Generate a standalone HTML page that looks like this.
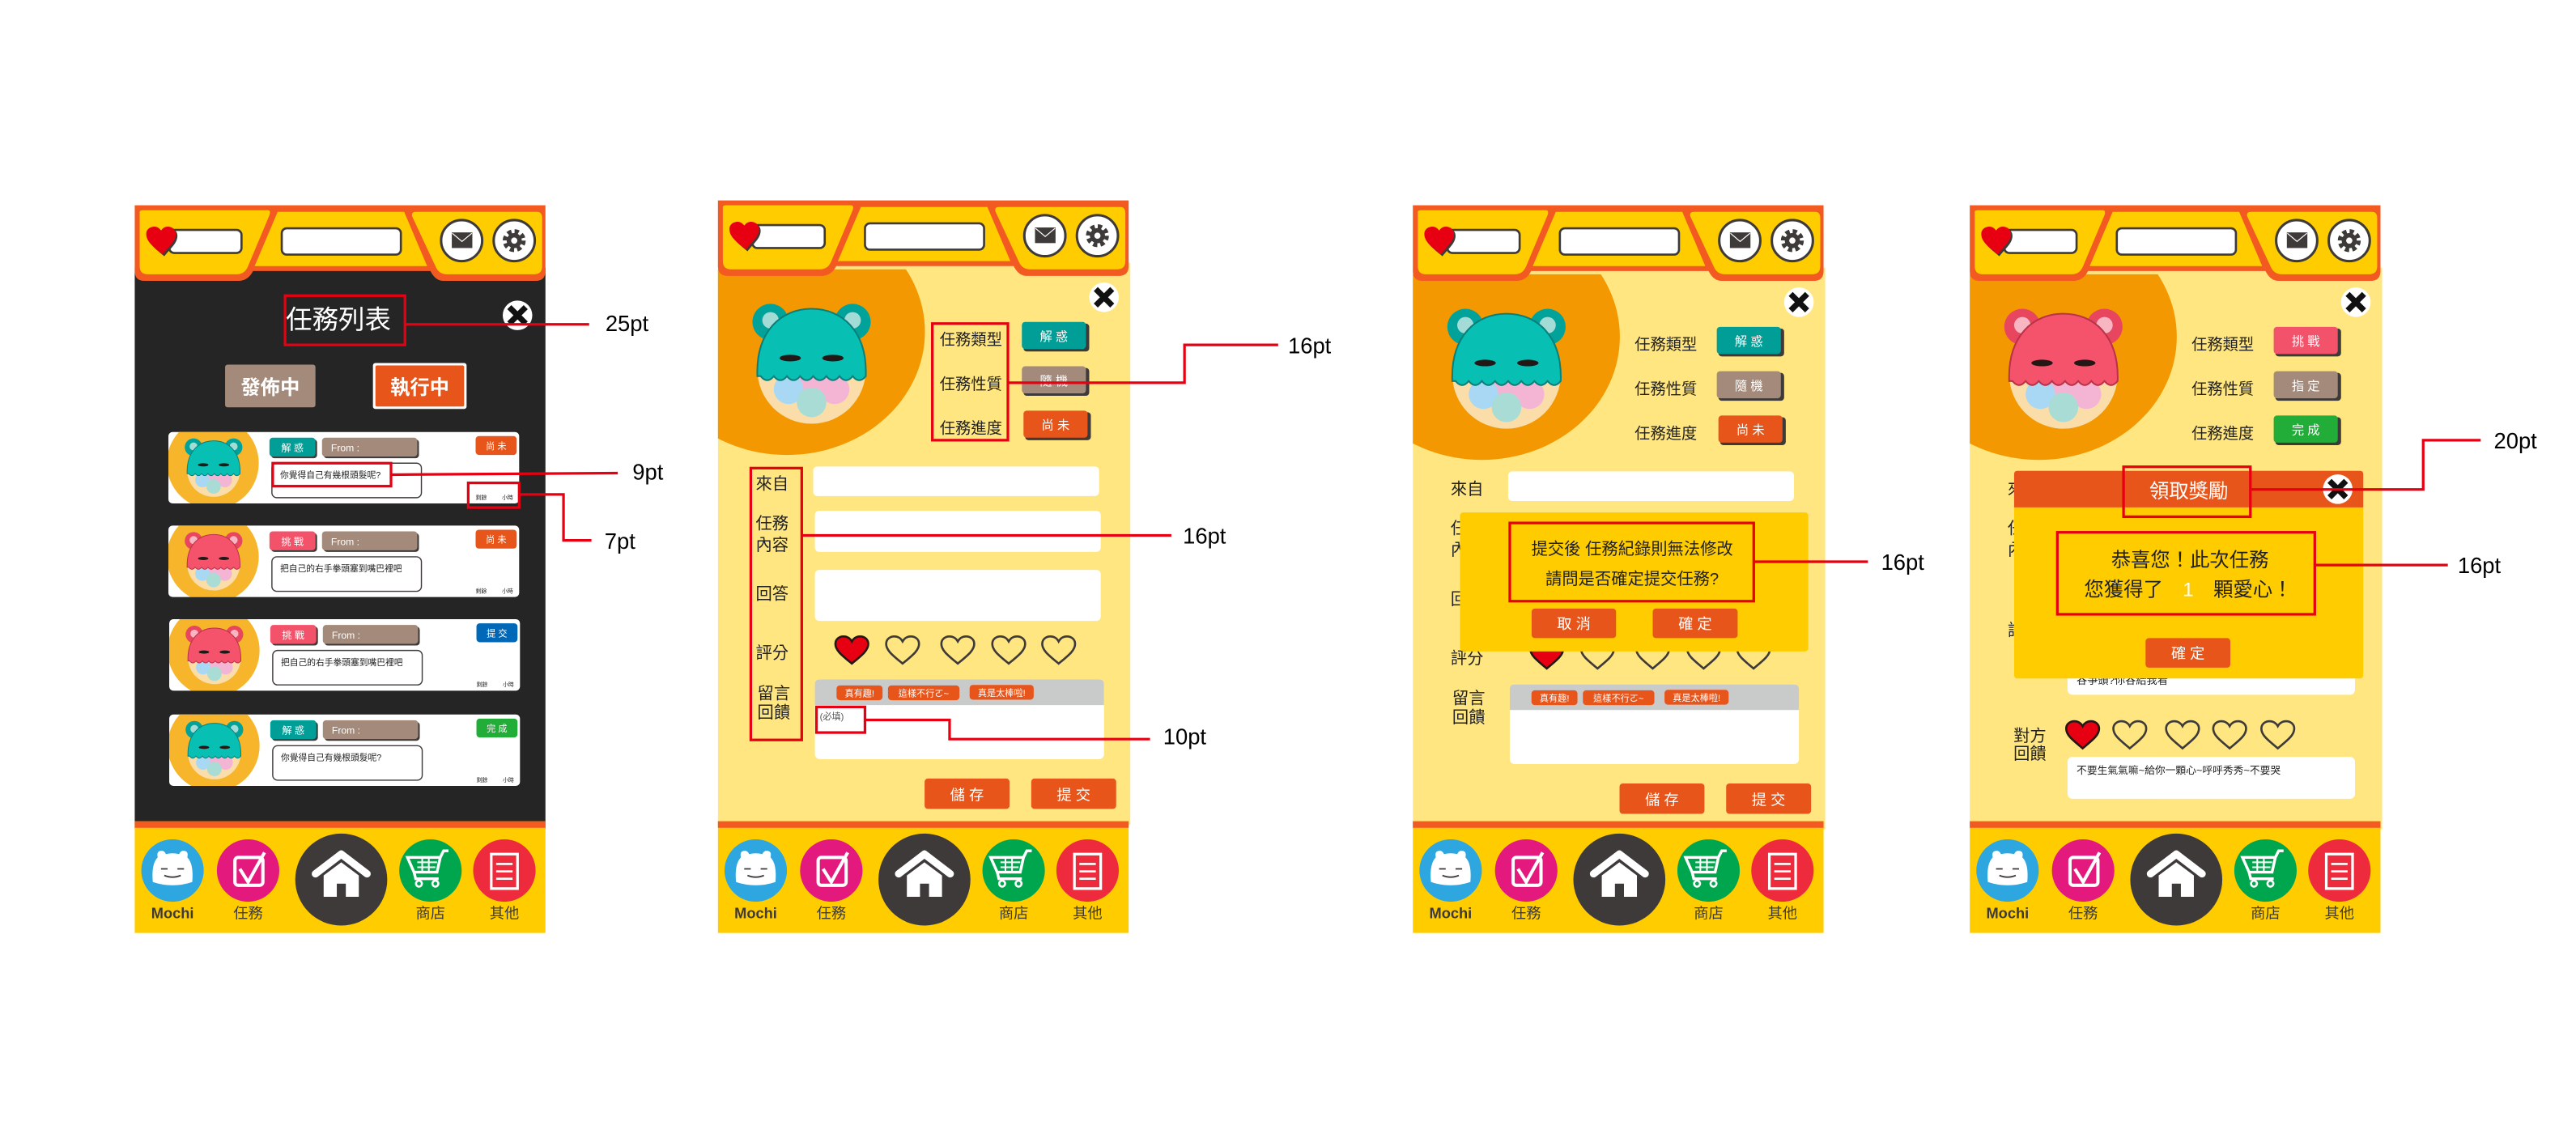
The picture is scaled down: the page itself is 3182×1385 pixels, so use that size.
<!DOCTYPE html>
<html><head><meta charset="utf-8"><style>
html,body{margin:0;padding:0;background:#fff;width:3182px;height:1385px;overflow:hidden}
svg{display:block}
text{font-family:"Liberation Sans","Noto Sans CJK TC",sans-serif}
</style></head><body>
<svg width="3182" height="1385" viewBox="0 0 1568 682.5" xmlns="http://www.w3.org/2000/svg">
<defs>
<g id="hdr">
 <path d="M0,0 H250 V40 Q250,46 244,46 H188 Q183,46 180,40 H72 Q69,46 63,46 H6 Q0,46 0,40 Z" fill="#F25A22"/>
 <path d="M3,4 Q3,3 5,3 H81 Q83,3 82,6 L69,37 Q67,42 62,42 H8 Q3,42 3,37 Z" fill="#FFCC00"/>
 <path d="M87,4 H164 L178,37 H73 Z" fill="#FFCC00"/>
 <path d="M171,4 H245 Q248,4 248,8 V37 Q248,42 243,42 H190 Q185,42 183,37 L169,7 Q168,4 171,4 Z" fill="#FFCC00"/>
 <rect x="21" y="15" width="44" height="14" rx="3" fill="#fff" stroke="#3E3A39" stroke-width="1.3"/>
 <path d="M18,31 C12,26 8,23 8,18.5 C8,15.5 10.5,14 13,14 C15,14 16.3,15.3 17,16.5 C17.7,15.3 19,14 21,14 C23.5,14 26,15.5 26,18.5 C26,23 22,26 18,31 Z" fill="#3E3A39"/>
 <path d="M17,30 C11,25 7,22 7,17.5 C7,14.5 9.5,13 12,13 C14,13 15.3,14.3 16,15.5 C16.7,14.3 18,13 20,13 C22.5,13 25,14.5 25,17.5 C25,22 21,25 17,30 Z" fill="#E60012"/>
 <rect x="89.5" y="14" width="72.5" height="16" rx="3" fill="#fff" stroke="#3E3A39" stroke-width="1.3"/>
 <circle cx="199" cy="21.5" r="12.5" fill="#fff" stroke="#3E3A39" stroke-width="1.5"/>
 <rect x="193" y="16.5" width="12.5" height="9.5" fill="#3E3A39"/>
 <path d="M193.3,17 L199.2,22 L205.2,17" stroke="#fff" stroke-width="0.6" fill="none"/>
 <circle cx="231" cy="21.5" r="12.5" fill="#fff" stroke="#3E3A39" stroke-width="1.5"/>
 <circle cx="231" cy="21.5" r="5.3" fill="none" stroke="#3E3A39" stroke-width="3.4" stroke-dasharray="2.4 1.77"/>
 <circle cx="231" cy="21.5" r="4.6" fill="#3E3A39"/>
 <circle cx="231" cy="21.5" r="1.9" fill="#fff"/>
</g>
<g id="nav">
 <rect x="0" y="0" width="250" height="68" fill="#FFCC00"/>
 <rect x="0" y="0" width="250" height="4" fill="#F25A22"/>
 <circle cx="23" cy="30" r="19" fill="#2EA7E0"/>
 <path d="M11,37 Q10,26 14,22 Q13,18 16.5,18 Q18,18 19,20 Q23,19 27,20 Q28,18 29.5,18 Q33,18 32,22 Q36,26 35,37 Q23,41 11,37 Z" fill="#fff"/>
 <path d="M16,29 h4 M26,29 h4 M18,33 Q23,35 28,33" stroke="#3E3A39" stroke-width="0.9" fill="none"/>
 <circle cx="69" cy="30" r="19" fill="#E4197E"/>
 <rect x="61" y="22" width="17" height="17" rx="2" fill="none" stroke="#fff" stroke-width="2"/>
 <path d="M64,29 L69,37 L79,19" stroke="#fff" stroke-width="2" fill="none"/>
 <circle cx="125.7" cy="35.5" r="28" fill="#3E3A39"/>
 <path d="M110,32 L125.7,20 L141.4,32" stroke="#fff" stroke-width="4.5" stroke-linecap="round" stroke-linejoin="round" fill="none"/>
 <path d="M115,33 L125.7,25 L136.4,33 V46 H115 Z" fill="#fff"/>
 <rect x="123" y="38" width="5.5" height="8" fill="#3E3A39"/>
 <circle cx="180" cy="30" r="19" fill="#00A64E"/>
 <path d="M166,22 H186 L184,31 H170 Z M170,31 L171,35 H185 M186,22 L188,18 H191" stroke="#fff" stroke-width="1.7" fill="none"/>
 <path d="M172,25 H184 M172,28 H183 M175,22 V31 M179,22 V31" stroke="#fff" stroke-width="1"/>
 <circle cx="173" cy="38" r="1.8" fill="none" stroke="#fff" stroke-width="1.3"/>
 <circle cx="183" cy="38" r="1.8" fill="none" stroke="#fff" stroke-width="1.3"/>
 <circle cx="225" cy="30" r="19" fill="#EE2A3D"/>
 <rect x="217" y="20" width="16" height="21" fill="none" stroke="#fff" stroke-width="1.6"/>
 <path d="M220,26 h10 M220,30.5 h10 M220,35 h10" stroke="#fff" stroke-width="1.3"/>
 <text x="23" y="59" font-size="9" font-weight="bold" fill="#3E3A39" text-anchor="middle">Mochi</text>
 <text x="69" y="59" font-size="9" fill="#3E3A39" text-anchor="middle">任務</text>
 <text x="180" y="59" font-size="9" fill="#3E3A39" text-anchor="middle">商店</text>
 <text x="225" y="59" font-size="9" fill="#3E3A39" text-anchor="middle">其他</text>
</g>
<symbol id="mochiT" viewBox="0 0 80 80">
 <circle cx="15" cy="17" r="11" fill="#00A29A"/><circle cx="15" cy="16" r="5" fill="#A3DCD6"/>
 <circle cx="65" cy="17" r="11" fill="#00A29A"/><circle cx="65" cy="16" r="5" fill="#A3DCD6"/>
 <circle cx="40" cy="46" r="33" fill="#FADDA8"/>
 <circle cx="40" cy="52" r="8" fill="#F4B5D4"/><circle cx="26" cy="58" r="9" fill="#A9D8F5"/><circle cx="54" cy="58" r="9" fill="#F4B5D4"/><circle cx="40" cy="66" r="9" fill="#A8DCD4"/>
 <path d="M7,50 C6,22 22,9 40,9 C58,9 74,22 73,50 Q69,55 65,50 Q61,55 57,50 Q53,55 49,50 Q45,55 41,50 Q37,55 33,50 Q29,55 25,50 Q21,55 17,50 Q13,55 9,50 Z" fill="#07BFB3" stroke="#0A7E78" stroke-width="1"/>
 <ellipse cx="27" cy="39" rx="6.5" ry="2" fill="#231815"/><ellipse cx="53" cy="39" rx="6.5" ry="2" fill="#231815"/>
</symbol>
<symbol id="mochiP" viewBox="0 0 80 80">
 <circle cx="15" cy="17" r="11" fill="#E8455E"/><circle cx="15" cy="16" r="5" fill="#F7B6C2"/>
 <circle cx="65" cy="17" r="11" fill="#E8455E"/><circle cx="65" cy="16" r="5" fill="#F7B6C2"/>
 <circle cx="40" cy="46" r="33" fill="#FADDA8"/>
 <circle cx="40" cy="52" r="8" fill="#F4B5D4"/><circle cx="26" cy="58" r="9" fill="#A9D8F5"/><circle cx="54" cy="58" r="9" fill="#F4B5D4"/><circle cx="40" cy="66" r="9" fill="#A8DCD4"/>
 <path d="M7,50 C6,22 22,9 40,9 C58,9 74,22 73,50 Q69,55 65,50 Q61,55 57,50 Q53,55 49,50 Q45,55 41,50 Q37,55 33,50 Q29,55 25,50 Q21,55 17,50 Q13,55 9,50 Z" fill="#F5526C" stroke="#B83248" stroke-width="1"/>
 <ellipse cx="27" cy="39" rx="6.5" ry="2" fill="#231815"/><ellipse cx="53" cy="39" rx="6.5" ry="2" fill="#231815"/>
</symbol>
<g id="closeX"><circle r="9" fill="#fff"/><path d="M-5,-5 L5,5 M5,-5 L-5,5" stroke="#111" stroke-width="3.5"/></g>
<path id="hF" d="M0,8 C-6,3 -10,0 -10,-4 C-10,-7 -7.5,-8.5 -5,-8.5 C-2.5,-8.5 -0.8,-7 0,-5.5 C0.8,-7 2.5,-8.5 5,-8.5 C7.5,-8.5 10,-7 10,-4 C10,0 6,3 0,8 Z"/>
<clipPath id="bodyclip"><rect x="0" y="42" width="251" height="336"/></clipPath>
</defs>

<!-- ============ PHONE 1 ============ -->
<g transform="translate(82,125)">
 <rect x="0" y="38" width="250" height="342" fill="#252525"/>
 <use href="#hdr"/>
 <text x="124" y="75" font-size="16" fill="#fff" text-anchor="middle">任務列表</text>
 <use href="#closeX" transform="translate(233,67)"/>
 <rect x="55" y="97" width="55" height="26" rx="1.5" fill="#A38A7A"/>
 <text x="82.5" y="115" font-size="12" font-weight="bold" fill="#fff" text-anchor="middle">發佈中</text>
 <rect x="145" y="96" width="57" height="28" rx="1.5" fill="#fff"/>
 <rect x="146.5" y="97.5" width="54" height="25" rx="1" fill="#E8551A"/>
 <text x="173.5" y="115" font-size="12" font-weight="bold" fill="#fff" text-anchor="middle">執行中</text>

 <g transform="translate(20.5,138)">
  <clipPath id="c1"><rect width="213.5" height="43.5" rx="2.5"/></clipPath>
  <rect width="213.5" height="43.5" rx="2.5" fill="#fff"/>
  <circle cx="27" cy="19" r="28" fill="#F7B52C" clip-path="url(#c1)"/>
  <use href="#mochiT" x="8" y="1" width="39" height="39"/>
  <rect x="62.5" y="4.5" width="28" height="11.5" rx="2" fill="#3E3A39"/><rect x="61.5" y="3.5" width="28" height="11.5" rx="2" fill="#009E96"/>
  <text x="75.5" y="11.8" font-size="6" fill="#fff" text-anchor="middle">解 惑</text>
  <rect x="94.5" y="4.5" width="58" height="11.5" rx="2" fill="#3E3A39"/><rect x="93.5" y="3.5" width="58" height="11.5" rx="2" fill="#A38A7A"/>
  <text x="99" y="11.8" font-size="6" fill="#fff">From :</text>
  <rect x="187" y="2.5" width="25" height="11.5" rx="2" fill="#E8551A"/><text x="199.5" y="10.5" font-size="5.5" fill="#fff" text-anchor="middle">尚 未</text>
  <rect x="63" y="19" width="91" height="21" rx="3" fill="#fff" stroke="#3E3A39" stroke-width="0.7"/>
  <text x="68" y="28" font-size="5.3" fill="#222">你覺得自己有幾根頭髮呢?</text>
  <text x="187" y="41" font-size="3.4" fill="#222">剩餘</text><text x="203" y="41" font-size="3.4" fill="#222">小時</text>
 </g>
 <g transform="translate(20.5,195)">
  <clipPath id="c2"><rect width="213.5" height="43.5" rx="2.5"/></clipPath>
  <rect width="213.5" height="43.5" rx="2.5" fill="#fff"/>
  <circle cx="27" cy="19" r="28" fill="#F7B52C" clip-path="url(#c2)"/>
  <use href="#mochiP" x="8" y="1" width="39" height="39"/>
  <rect x="62.5" y="4.5" width="28" height="11.5" rx="2" fill="#3E3A39"/><rect x="61.5" y="3.5" width="28" height="11.5" rx="2" fill="#F2526A"/>
  <text x="75.5" y="11.8" font-size="6" fill="#fff" text-anchor="middle">挑 戰</text>
  <rect x="94.5" y="4.5" width="58" height="11.5" rx="2" fill="#3E3A39"/><rect x="93.5" y="3.5" width="58" height="11.5" rx="2" fill="#A38A7A"/>
  <text x="99" y="11.8" font-size="6" fill="#fff">From :</text>
  <rect x="187" y="2.5" width="25" height="11.5" rx="2" fill="#E8551A"/><text x="199.5" y="10.5" font-size="5.5" fill="#fff" text-anchor="middle">尚 未</text>
  <rect x="63" y="19" width="91" height="21" rx="3" fill="#fff" stroke="#3E3A39" stroke-width="0.7"/>
  <text x="68" y="28" font-size="5.3" fill="#222">把自己的右手拳頭塞到嘴巴裡吧</text>
  <text x="187" y="41" font-size="3.4" fill="#222">剩餘</text><text x="203" y="41" font-size="3.4" fill="#222">小時</text>
 </g>
 <g transform="translate(21,252)">
  <clipPath id="c3"><rect width="213.5" height="43.5" rx="2.5"/></clipPath>
  <rect width="213.5" height="43.5" rx="2.5" fill="#fff"/>
  <circle cx="27" cy="19" r="28" fill="#F7B52C" clip-path="url(#c3)"/>
  <use href="#mochiP" x="8" y="1" width="39" height="39"/>
  <rect x="62.5" y="4.5" width="28" height="11.5" rx="2" fill="#3E3A39"/><rect x="61.5" y="3.5" width="28" height="11.5" rx="2" fill="#F2526A"/>
  <text x="75.5" y="11.8" font-size="6" fill="#fff" text-anchor="middle">挑 戰</text>
  <rect x="94.5" y="4.5" width="58" height="11.5" rx="2" fill="#3E3A39"/><rect x="93.5" y="3.5" width="58" height="11.5" rx="2" fill="#A38A7A"/>
  <text x="99" y="11.8" font-size="6" fill="#fff">From :</text>
  <rect x="187" y="2.5" width="25" height="11.5" rx="2" fill="#0068B7"/><text x="199.5" y="10.5" font-size="5.5" fill="#fff" text-anchor="middle">提 交</text>
  <rect x="63" y="19" width="91" height="21" rx="3" fill="#fff" stroke="#3E3A39" stroke-width="0.7"/>
  <text x="68" y="28" font-size="5.3" fill="#222">把自己的右手拳頭塞到嘴巴裡吧</text>
  <text x="187" y="41" font-size="3.4" fill="#222">剩餘</text><text x="203" y="41" font-size="3.4" fill="#222">小時</text>
 </g>
 <g transform="translate(21,310)">
  <clipPath id="c4"><rect width="213.5" height="43.5" rx="2.5"/></clipPath>
  <rect width="213.5" height="43.5" rx="2.5" fill="#fff"/>
  <circle cx="27" cy="19" r="28" fill="#F7B52C" clip-path="url(#c4)"/>
  <use href="#mochiT" x="8" y="1" width="39" height="39"/>
  <rect x="62.5" y="4.5" width="28" height="11.5" rx="2" fill="#3E3A39"/><rect x="61.5" y="3.5" width="28" height="11.5" rx="2" fill="#009E96"/>
  <text x="75.5" y="11.8" font-size="6" fill="#fff" text-anchor="middle">解 惑</text>
  <rect x="94.5" y="4.5" width="58" height="11.5" rx="2" fill="#3E3A39"/><rect x="93.5" y="3.5" width="58" height="11.5" rx="2" fill="#A38A7A"/>
  <text x="99" y="11.8" font-size="6" fill="#fff">From :</text>
  <rect x="187" y="2.5" width="25" height="11.5" rx="2" fill="#22AC38"/><text x="199.5" y="10.5" font-size="5.5" fill="#fff" text-anchor="middle">完 成</text>
  <rect x="63" y="19" width="91" height="21" rx="3" fill="#fff" stroke="#3E3A39" stroke-width="0.7"/>
  <text x="68" y="28" font-size="5.3" fill="#222">你覺得自己有幾根頭髮呢?</text>
  <text x="187" y="41" font-size="3.4" fill="#222">剩餘</text><text x="203" y="41" font-size="3.4" fill="#222">小時</text>
 </g>
 <use href="#nav" y="375"/>
</g>
<g fill="none" stroke="#E60012" stroke-width="1.6">
 <rect x="173.5" y="180" width="73" height="30"/>
 <path d="M246.5,197.5 H358.6"/>
 <rect x="166" y="282" width="72" height="14"/>
 <path d="M238,289 L376,288"/>
 <rect x="285" y="294" width="31" height="15"/>
 <path d="M316,301 H343 V329 H360"/>
</g>
<text x="368.5" y="201.5" font-size="13.5">25pt</text>
<text x="385" y="292" font-size="13.5">9pt</text>
<text x="368" y="334" font-size="13.5">7pt</text>

<!-- ============ PHONE 2 ============ -->
<g transform="translate(437,122)">
 <rect x="0" y="38" width="251" height="342" fill="#FFE681"/>
 <ellipse cx="42" cy="80" rx="84" ry="75" fill="#F39800" clip-path="url(#bodyclip)"/>
 <use href="#hdr"/>
 <use href="#mochiT" x="17" y="55" width="80" height="84"/>
 <use href="#closeX" transform="translate(235,59)"/>
 <g font-size="9.5" fill="#222">
  <text x="135" y="88">任務類型</text><text x="135" y="115">任務性質</text><text x="135" y="142">任務進度</text>
 </g>
 <rect x="186" y="75" width="40" height="17" rx="2" fill="#3E3A39"/><rect x="185" y="74" width="39" height="16.5" rx="2" fill="#009E96"/>
 <text x="204.5" y="85.5" font-size="7.5" fill="#fff" text-anchor="middle">解 惑</text>
 <rect x="186" y="102" width="40" height="17" rx="2" fill="#3E3A39"/><rect x="185" y="101" width="39" height="16.5" rx="2" fill="#A38A7A"/>
 <text x="204.5" y="112.5" font-size="7.5" fill="#fff" text-anchor="middle">隨 機</text>
 <rect x="187" y="129" width="40" height="17" rx="2" fill="#3E3A39"/><rect x="186" y="128" width="39" height="16.5" rx="2" fill="#E8551A"/>
 <text x="205.5" y="139.5" font-size="7.5" fill="#fff" text-anchor="middle">尚 未</text>
 <g font-size="10" fill="#222">
  <text x="23" y="176">來自</text>
  <text x="23" y="200">任務</text><text x="23" y="213">內容</text>
  <text x="23" y="243">回答</text>
  <text x="23" y="279">評分</text>
  <text x="24" y="303.5">留言</text><text x="24" y="315">回饋</text>
 </g>
 <rect x="58" y="162" width="174" height="18" rx="2.5" fill="#fff"/>
 <rect x="59" y="189" width="174" height="25" rx="2.5" fill="#fff"/>
 <rect x="59" y="225" width="174" height="31" rx="2.5" fill="#fff"/>
 <g fill="none" stroke="#3E3A39" stroke-width="1.3">
  <use href="#hF" transform="translate(81.5,274)" fill="#E60012" stroke="#231815"/>
  <use href="#hF" transform="translate(112.4,274)"/>
  <use href="#hF" transform="translate(146,274)"/>
  <use href="#hF" transform="translate(177,274)"/>
  <use href="#hF" transform="translate(207.4,274)"/>
 </g>
 <rect x="59" y="291.7" width="176" height="48.5" rx="3" fill="#fff"/>
 <path d="M59,307.3 V294.7 Q59,291.7 62,291.7 H232 Q235,291.7 235,294.7 V307.3 Z" fill="#C9CACA"/>
 <rect x="72.2" y="295.3" width="28" height="9" rx="2" fill="#E8551A"/><text x="86.2" y="302" font-size="5.5" fill="#fff" text-anchor="middle">真有趣!</text>
 <rect x="103.5" y="295.3" width="43.5" height="9" rx="2" fill="#E8551A"/><text x="125.2" y="302" font-size="5.5" fill="#fff" text-anchor="middle">這樣不行ㄛ~</text>
 <rect x="153.2" y="295" width="39" height="9" rx="2" fill="#E8551A"/><text x="172.7" y="301.7" font-size="5.5" fill="#fff" text-anchor="middle">真是太棒啦!</text>
 <text x="62" y="316" font-size="5.5" fill="#555">(必填)</text>
 <rect x="125.8" y="352" width="51.7" height="18.5" rx="2" fill="#E8551A"/><text x="151.6" y="365" font-size="9" fill="#fff" text-anchor="middle">儲 存</text>
 <rect x="190.7" y="352" width="51.7" height="18.5" rx="2" fill="#E8551A"/><text x="216.5" y="365" font-size="9" fill="#fff" text-anchor="middle">提 交</text>
 <use href="#nav" y="378"/>
</g>
<g fill="none" stroke="#E60012" stroke-width="1.6">
 <rect x="567.5" y="197" width="46" height="71"/>
 <path d="M613.5,233 H721 V210 H778"/>
 <rect x="457" y="285" width="31" height="165.5"/>
 <path d="M488,326 H713"/>
 <rect x="497" y="430.4" width="29.5" height="15.6"/>
 <path d="M526.5,438.3 H578 V450 H700"/>
</g>
<text x="784" y="215" font-size="13.5">16pt</text>
<text x="720" y="331" font-size="13.5">16pt</text>
<text x="708" y="453" font-size="13.5">10pt</text>

<!-- ============ PHONE 3 ============ -->
<g transform="translate(860,125)">
 <rect x="0" y="38" width="251" height="342" fill="#FFE681"/>
 <ellipse cx="42" cy="80" rx="84" ry="75" fill="#F39800" clip-path="url(#bodyclip)"/>
 <use href="#hdr"/>
 <use href="#mochiT" x="17" y="55" width="80" height="84"/>
 <use href="#closeX" transform="translate(235,59)"/>
 <g font-size="9.5" fill="#222">
  <text x="135" y="88">任務類型</text><text x="135" y="115">任務性質</text><text x="135" y="142">任務進度</text>
 </g>
 <rect x="186" y="75" width="40" height="17" rx="2" fill="#3E3A39"/><rect x="185" y="74" width="39" height="16.5" rx="2" fill="#009E96"/>
 <text x="204.5" y="85.5" font-size="7.5" fill="#fff" text-anchor="middle">解 惑</text>
 <rect x="186" y="102" width="40" height="17" rx="2" fill="#3E3A39"/><rect x="185" y="101" width="39" height="16.5" rx="2" fill="#A38A7A"/>
 <text x="204.5" y="112.5" font-size="7.5" fill="#fff" text-anchor="middle">隨 機</text>
 <rect x="187" y="129" width="40" height="17" rx="2" fill="#3E3A39"/><rect x="186" y="128" width="39" height="16.5" rx="2" fill="#E8551A"/>
 <text x="205.5" y="139.5" font-size="7.5" fill="#fff" text-anchor="middle">尚 未</text>
 <g font-size="10" fill="#222">
  <text x="23" y="176">來自</text>
  <text x="23" y="200">任務</text><text x="23" y="213">內容</text>
  <text x="23" y="243">回答</text>
  <text x="23" y="279">評分</text>
  <text x="24" y="303.5">留言</text><text x="24" y="315">回饋</text>
 </g>
 <rect x="58" y="162" width="174" height="18" rx="2.5" fill="#fff"/>
 <g fill="none" stroke="#3E3A39" stroke-width="1.3">
  <use href="#hF" transform="translate(81.5,274)" fill="#E60012" stroke="#231815"/>
  <use href="#hF" transform="translate(112.4,274)"/>
  <use href="#hF" transform="translate(146,274)"/>
  <use href="#hF" transform="translate(177,274)"/>
  <use href="#hF" transform="translate(207.4,274)"/>
 </g>
 <rect x="59" y="291.7" width="176" height="48.5" rx="3" fill="#fff"/>
 <path d="M59,307.3 V294.7 Q59,291.7 62,291.7 H232 Q235,291.7 235,294.7 V307.3 Z" fill="#C9CACA"/>
 <rect x="72.2" y="295.3" width="28" height="9" rx="2" fill="#E8551A"/><text x="86.2" y="302" font-size="5.5" fill="#fff" text-anchor="middle">真有趣!</text>
 <rect x="103.5" y="295.3" width="43.5" height="9" rx="2" fill="#E8551A"/><text x="125.2" y="302" font-size="5.5" fill="#fff" text-anchor="middle">這樣不行ㄛ~</text>
 <rect x="153.2" y="295" width="39" height="9" rx="2" fill="#E8551A"/><text x="172.7" y="301.7" font-size="5.5" fill="#fff" text-anchor="middle">真是太棒啦!</text>
 <rect x="125.8" y="352" width="51.7" height="18.5" rx="2" fill="#E8551A"/><text x="151.6" y="365" font-size="9" fill="#fff" text-anchor="middle">儲 存</text>
 <rect x="190.7" y="352" width="51.7" height="18.5" rx="2" fill="#E8551A"/><text x="216.5" y="365" font-size="9" fill="#fff" text-anchor="middle">提 交</text>
 <rect x="28.7" y="187" width="212" height="84.6" rx="2" fill="#FFCC00"/>
 <text x="133.5" y="212.6" font-size="10" fill="#222" text-anchor="middle">提交後 任務紀錄則無法修改</text>
 <text x="133.5" y="230.7" font-size="10" fill="#222" text-anchor="middle">請問是否確定提交任務?</text>
 <rect x="72.3" y="245.5" width="51.4" height="18" rx="2" fill="#E8551A"/><text x="98" y="258" font-size="9" fill="#fff" text-anchor="middle">取 消</text>
 <rect x="146" y="245.5" width="51.7" height="18" rx="2" fill="#E8551A"/><text x="171.8" y="258" font-size="9" fill="#fff" text-anchor="middle">確 定</text>
 <use href="#nav" y="375"/>
</g>
<g fill="none" stroke="#E60012" stroke-width="1.6">
 <rect x="919" y="318.4" width="148.5" height="47.6"/>
 <path d="M1067.5,342 H1137"/>
</g>
<text x="1145" y="347" font-size="13.5">16pt</text>

<!-- ============ PHONE 4 ============ -->
<g transform="translate(1199,125)">
 <rect x="0" y="38" width="251" height="342" fill="#FFE681"/>
 <ellipse cx="42" cy="80" rx="84" ry="75" fill="#F39800" clip-path="url(#bodyclip)"/>
 <use href="#hdr"/>
 <use href="#mochiP" x="17" y="55" width="80" height="84"/>
 <use href="#closeX" transform="translate(235,59)"/>
 <g font-size="9.5" fill="#222">
  <text x="135" y="88">任務類型</text><text x="135" y="115">任務性質</text><text x="135" y="142">任務進度</text>
 </g>
 <rect x="186" y="75" width="40" height="17" rx="2" fill="#3E3A39"/><rect x="185" y="74" width="39" height="16.5" rx="2" fill="#F2526A"/>
 <text x="204.5" y="85.5" font-size="7.5" fill="#fff" text-anchor="middle">挑 戰</text>
 <rect x="186" y="102" width="40" height="17" rx="2" fill="#3E3A39"/><rect x="185" y="101" width="39" height="16.5" rx="2" fill="#A38A7A"/>
 <text x="204.5" y="112.5" font-size="7.5" fill="#fff" text-anchor="middle">指 定</text>
 <rect x="186" y="129" width="40" height="17" rx="2" fill="#3E3A39"/><rect x="185" y="128" width="39" height="16.5" rx="2" fill="#22AC38"/>
 <text x="204.5" y="139.5" font-size="7.5" fill="#fff" text-anchor="middle">完 成</text>
 <g font-size="10" fill="#222">
  <text x="23" y="176">來自</text>
  <text x="23" y="200">任務</text><text x="23" y="213">內容</text>
  <text x="23" y="262">評分</text>
  <text x="26.6" y="326.5">對方</text><text x="26.6" y="337.2">回饋</text>
 </g>
 <rect x="59.5" y="162" width="175" height="136" rx="3" fill="#fff"/>
 <text x="65" y="291.4" font-size="6.5" fill="#222">谷爭頭?你谷給我看</text>
 <g fill="none" stroke="#3E3A39" stroke-width="1.3">
  <use href="#hF" transform="translate(68.7,322.6)" fill="#E60012" stroke="#231815"/>
  <use href="#hF" transform="translate(97.4,322.6)"/>
  <use href="#hF" transform="translate(129.5,322.6)"/>
  <use href="#hF" transform="translate(158.2,322.6)"/>
  <use href="#hF" transform="translate(187.5,322.6)"/>
 </g>
 <rect x="59.5" y="335.8" width="175" height="25.5" rx="3" fill="#fff"/>
 <text x="65" y="346" font-size="6.3" fill="#222">不要生氣氣嘛~給你一顆心~呼呼秀秀~不要哭</text>
 <rect x="27" y="161.7" width="212.5" height="126.4" rx="2" fill="#FFCC00"/>
 <path d="M27,183.9 V163.7 Q27,161.7 29,161.7 H237.5 Q239.5,161.7 239.5,163.7 V183.9 Z" fill="#E8551A"/>
 <text x="133.3" y="178" font-size="12" fill="#fff" text-anchor="middle">領取獎勵</text>
 <use href="#closeX" transform="translate(224,172.8)"/>
 <text x="134" y="219.9" font-size="12" fill="#222" text-anchor="middle">恭喜您！此次任務</text>
 <text x="133" y="238" font-size="12" fill="#222" text-anchor="middle">您獲得了　<tspan fill="#fff">1</tspan>　顆愛心！</text>
 <rect x="107" y="263.5" width="51.6" height="18" rx="2" fill="#E8551A"/><text x="132.8" y="276" font-size="9" fill="#fff" text-anchor="middle">確 定</text>
 <use href="#nav" y="375"/>
</g>
<g fill="none" stroke="#E60012" stroke-width="1.6">
 <rect x="1292.6" y="284.2" width="77.2" height="30.4"/>
 <path d="M1369.8,298 H1475 V268 H1510"/>
 <rect x="1252.3" y="324.1" width="156.7" height="49.9"/>
 <path d="M1409,344 H1490"/>
</g>
<text x="1518" y="273" font-size="13.5">20pt</text>
<text x="1496" y="349" font-size="13.5">16pt</text>
</svg>
</body></html>
